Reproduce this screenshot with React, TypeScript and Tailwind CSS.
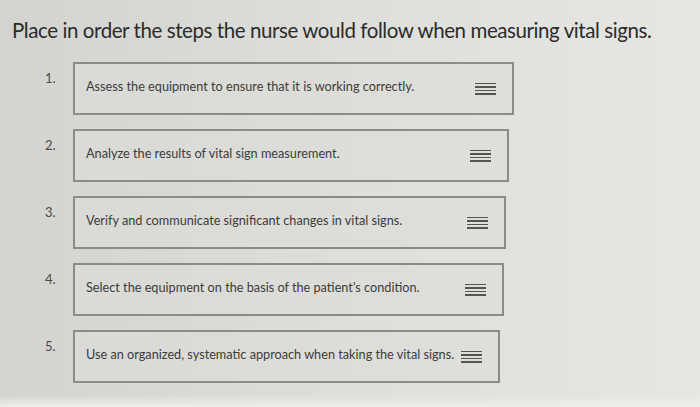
const steps = [
  "Assess the equipment to ensure that it is working correctly.",
  "Analyze the results of vital sign measurement.",
  "Verify and communicate significant changes in vital signs.",
  "Select the equipment on the basis of the patient's condition.",
  "Use an organized, systematic approach when taking the vital signs.",
];

// box widths shrink a little down the page (photo perspective)
const widths = ["w-[441px]", "w-[436px]", "w-[433px]", "w-[431px]", "w-[427px]"];

function Grip() {
  return (
    <div className="flex flex-col gap-[2px] w-[21px] shrink-0">
      <div className="h-[1.5px] bg-[#55554f]" />
      <div className="h-[1.5px] bg-[#55554f]" />
      <div className="h-[1.5px] bg-[#55554f]" />
      <div className="h-[1.5px] bg-[#55554f]" />
    </div>
  );
}

export default function App() {
  return (
    <div
      className="w-[700px] h-[407px] overflow-hidden bg-gradient-to-r from-[#d3d3cf] via-[#dededa] to-[#e6e6e2] text-[#3a3a38] flex flex-col"
      style={{ fontFamily: "Lato, 'Open Sans', sans-serif" }}
    >
      <h1 className="pl-[12px] pt-[16px] text-[20.5px] leading-[28px] tracking-[-0.42px] whitespace-nowrap text-[#2c2c2a]">
        Place in order the steps the nurse would follow when measuring vital signs.
      </h1>
      <ol className="mt-[18px] flex flex-col gap-[14px]">
        {steps.map((s, i) => (
          <li key={i} className="flex items-start">
            <span className="w-[73px] pl-[45px] pt-[7px] text-[13px] text-[#4a4a46]">{i + 1}.</span>
            <div
              className={`${widths[i]} h-[53px] border-2 border-[#8b8b87] bg-[#dcdcd8]/60 flex items-center justify-between pl-[11px] pr-[16px]`}
            >
              <span className="text-[12.7px] whitespace-nowrap text-[#3c3c3a] -mt-[4px]">{s}</span>
              <Grip />
            </div>
          </li>
        ))}
      </ol>
      <div className="mt-auto h-[12px] bg-gradient-to-b from-[#e6e6e2]/0 to-[#eeeeea]" />
    </div>
  );
}
